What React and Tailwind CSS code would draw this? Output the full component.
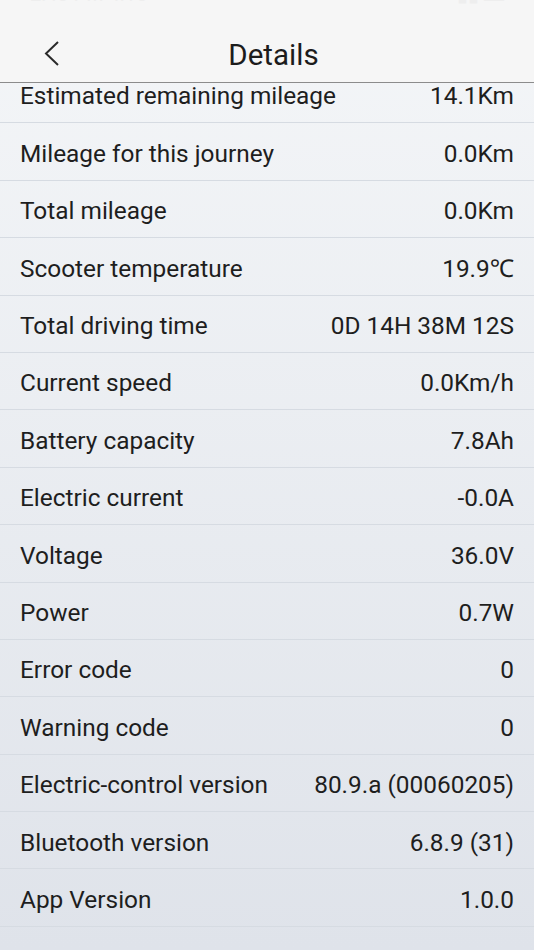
import React from "react";

const rows = [
  ["Estimated remaining mileage", "14.1Km"],
  ["Mileage for this journey", "0.0Km"],
  ["Total mileage", "0.0Km"],
  ["Scooter temperature", "19.9℃"],
  ["Total driving time", "0D 14H 38M 12S"],
  ["Current speed", "0.0Km/h"],
  ["Battery capacity", "7.8Ah"],
  ["Electric current", "-0.0A"],
  ["Voltage", "36.0V"],
  ["Power", "0.7W"],
  ["Error code", "0"],
  ["Warning code", "0"],
  ["Electric-control version", "80.9.a (00060205)"],
  ["Bluetooth version", "6.8.9 (31)"],
  ["App Version", "1.0.0"],
  ["", ""],
];

export default function App() {
  return (
    <div
      className="w-[534px] h-[950px] overflow-hidden flex flex-col bg-gradient-to-b from-[#f4f6f8] to-[#dfe3ea] text-[#1e1e1e]"
      style={{ fontFamily: "Roboto, 'Noto Sans', sans-serif" }}
    >
      <div className="h-[83px] shrink-0 bg-[#f6f6f6] border-b-[1.5px] border-[#8c8c8c] relative flex items-center justify-center">
        <div className="absolute left-0 right-0 -top-[16px] h-[20px] flex justify-between px-[30px] text-[#eeeeee] text-[20px] leading-[20px]">
          <span>2:40 PM 4:15</span>
          <span>▮▮ ▬</span>
        </div>
        <svg
          className="absolute left-[43px] top-[40px]"
          width="18"
          height="28"
          viewBox="0 0 18 28"
          fill="none"
          stroke="#2a2a2a"
          strokeWidth="2"
        >
          <path d="M15 2 L3 13.5 L15 25" />
        </svg>
        <span className="text-[29.5px] mt-[29px] ml-[13px] leading-none text-[#1c1c1c]">Details</span>
      </div>
      <div className="flex-1 overflow-hidden">
        <div className="-mt-[17px]">
          {rows.map(([k, v], i) => (
            <div
              key={i}
              className="h-[57.4px] flex items-center justify-between pl-[20px] pr-[20px] pt-[5px] border-b border-[#d6dbe2] text-[24.4px] leading-none"
            >
              <span>{k}</span>
              <span>{v}</span>
            </div>
          ))}
        </div>
      </div>
    </div>
  );
}
